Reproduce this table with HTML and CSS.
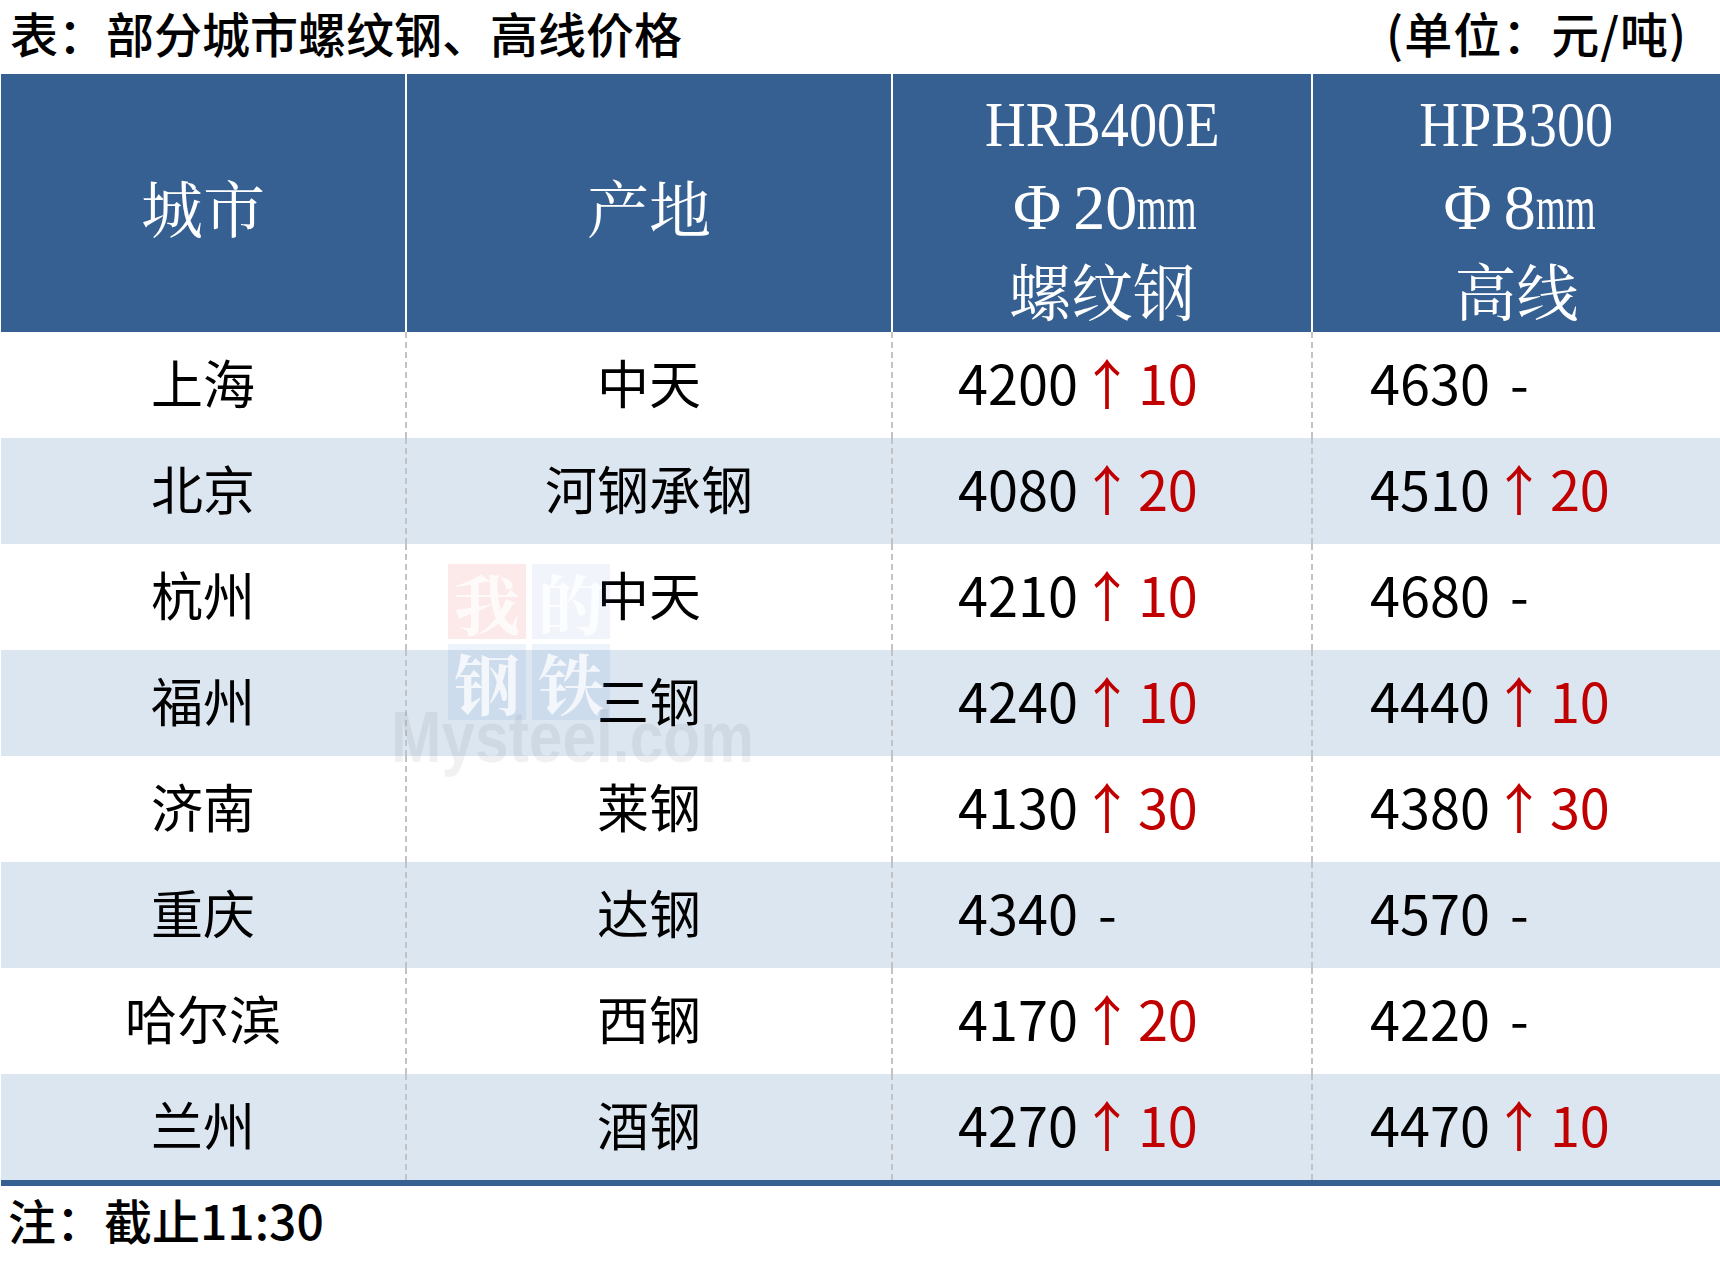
FILE: index.html
```html
<!DOCTYPE html>
<html lang="zh-CN">
<head>
<meta charset="utf-8">
<title>部分城市螺纹钢、高线价格</title>
<link rel="stylesheet" href="styles.css">
</head>
<body>
<div class="page">
  <div class="titlebar">
    <div class="title">表：部分城市螺纹钢、高线价格</div>
    <div class="unit">(单位：元/吨)</div>
  </div>
  <div class="tablewrap">
    <div class="grid">
      <div class="th"><span class="cjk">城市</span></div>
      <div class="th"><span class="cjk">产地</span></div>
      <div class="th multi">
        <span class="lat">HRB400E</span>
        <span class="spec"><span class="phi">Φ</span><span class="num">20</span><span class="mm">mm</span></span>
        <span class="cjk">螺纹钢</span>
      </div>
      <div class="th multi last">
        <span class="lat">HPB300</span>
        <span class="spec"><span class="phi">Φ</span><span class="num">8</span><span class="mm">mm</span></span>
        <span class="cjk">高线</span>
      </div>

      <div class="td c">上海</div><div class="td c">中天</div><div class="td p3">4200<span class="up"><span class="arr">↑</span>10</span></div><div class="td p4 last">4630<span class="dash">-</span></div>
      <div class="td c alt">北京</div><div class="td c alt">河钢承钢</div><div class="td p3 alt">4080<span class="up"><span class="arr">↑</span>20</span></div><div class="td p4 alt last">4510<span class="up"><span class="arr">↑</span>20</span></div>
      <div class="td c">杭州</div><div class="td c">中天</div><div class="td p3">4210<span class="up"><span class="arr">↑</span>10</span></div><div class="td p4 last">4680<span class="dash">-</span></div>
      <div class="td c alt">福州</div><div class="td c alt">三钢</div><div class="td p3 alt">4240<span class="up"><span class="arr">↑</span>10</span></div><div class="td p4 alt last">4440<span class="up"><span class="arr">↑</span>10</span></div>
      <div class="td c">济南</div><div class="td c">莱钢</div><div class="td p3">4130<span class="up"><span class="arr">↑</span>30</span></div><div class="td p4 last">4380<span class="up"><span class="arr">↑</span>30</span></div>
      <div class="td c alt">重庆</div><div class="td c alt">达钢</div><div class="td p3 alt">4340<span class="dash">-</span></div><div class="td p4 alt last">4570<span class="dash">-</span></div>
      <div class="td c">哈尔滨</div><div class="td c">西钢</div><div class="td p3">4170<span class="up"><span class="arr">↑</span>20</span></div><div class="td p4 last">4220<span class="dash">-</span></div>
      <div class="td c alt">兰州</div><div class="td c alt">酒钢</div><div class="td p3 alt">4270<span class="up"><span class="arr">↑</span>10</span></div><div class="td p4 alt last">4470<span class="up"><span class="arr">↑</span>10</span></div>
    </div>
    <div class="watermark" aria-hidden="true">
      <div class="wm-boxes">
        <span class="wm-box red">我</span><span class="wm-box blue">的</span>
        <span class="wm-box blue2">钢</span><span class="wm-box blue2">铁</span>
      </div>
      <div class="wm-text">Mysteel.com</div>
    </div>
  </div>
  <div class="note">注：截止11:30</div>
</div>
</body>
</html>
```

FILE: styles.css
```css
html, body {
  margin: 0;
  padding: 0;
  background: #ffffff;
}

body {
  font-family: "Noto Sans CJK SC", "Noto Sans", sans-serif;
  color: #000000;
}

.page {
  width: 1720px;
}

.titlebar {
  height: 74px;
  display: flex;
  justify-content: space-between;
  align-items: center;
  padding: 0 33px 10px 10px;
  box-sizing: border-box;
  font-size: 48px;
  font-weight: 500;
  line-height: 1;
}

.unit {
  letter-spacing: 1px;
}

.tablewrap {
  position: relative;
  margin-left: 1px;
}

.grid {
  display: grid;
  grid-template-columns: 406px 486px 420px 407px;
  grid-template-rows: 258px repeat(8, 106px);
  border-bottom: 6px solid #376092;
}

.th {
  background: #376092;
  color: #ffffff;
  border-right: 2px solid #ffffff;
  display: flex;
  flex-direction: column;
  align-items: center;
  justify-content: center;
  padding-top: 8px;
  box-sizing: border-box;
}

.th.last,
.td.last {
  border-right: none;
}

.th .cjk {
  font-family: "Noto Serif CJK SC", "Noto Sans CJK SC", serif;
  font-weight: 400;
  font-size: 62px;
  line-height: 82px;
}

.th .lat {
  display: inline-block;
  font-family: "Liberation Serif", serif;
  font-size: 64px;
  line-height: 82px;
  transform: scaleX(0.88);
}

.th .spec {
  display: flex;
  align-items: baseline;
  font-family: "Liberation Serif", serif;
  font-size: 64px;
  line-height: 82px;
  padding-left: 6px;
}

.spec .phi {
  font-size: 66px;
  margin-right: 12px;
}

.spec .mm {
  display: inline-block;
  transform: scaleX(0.6);
  transform-origin: left center;
  margin-right: -40px;
}

.td {
  display: flex;
  align-items: center;
  font-size: 52px;
  line-height: 1;
  border-right: 2px dashed #c3c3c3;
  box-sizing: border-box;
  padding-bottom: 7px;
  white-space: pre;
}

.td.p3,
.td.p4 {
  font-size: 54px;
}

.td.alt {
  background: #dce6f1;
}

.td.c {
  justify-content: center;
}

.td.p3 {
  padding-left: 65px;
}

.td.p4 {
  padding-left: 57px;
}

.up {
  color: #c00000;
}

.arr {
  margin: 0 4px 0 2px;
}

.dash {
  margin-left: 20px;
}

.note {
  font-size: 48px;
  font-weight: 500;
  line-height: 66px;
  padding-left: 8px;
}

.watermark {
  position: absolute;
  left: 390px;
  top: 490px;
  width: 380px;
  height: 230px;
  pointer-events: none;
}

.wm-boxes {
  position: absolute;
  left: 57px;
  top: 0;
  display: grid;
  grid-template-columns: 78px 78px;
  grid-template-rows: 75px 76px;
  column-gap: 6px;
  row-gap: 5px;
}

.wm-box {
  display: flex;
  align-items: center;
  justify-content: center;
  font-family: "Noto Serif CJK SC", "Noto Sans CJK SC", serif;
  font-weight: 700;
  font-size: 66px;
  line-height: 1;
  color: rgba(255, 255, 255, 0.75);
}

.wm-box.red {
  background: rgba(225, 60, 60, 0.11);
}

.wm-box.blue {
  background: rgba(60, 120, 200, 0.07);
}

.wm-box.blue2 {
  background: rgba(60, 120, 200, 0.09);
}

.wm-text {
  position: absolute;
  left: 0;
  top: 137px;
  font-family: "Liberation Sans", sans-serif;
  font-weight: 700;
  font-size: 72px;
  line-height: 1;
  white-space: nowrap;
  color: rgba(0, 0, 0, 0.055);
  transform: scaleX(0.84);
  transform-origin: left center;
}
```
